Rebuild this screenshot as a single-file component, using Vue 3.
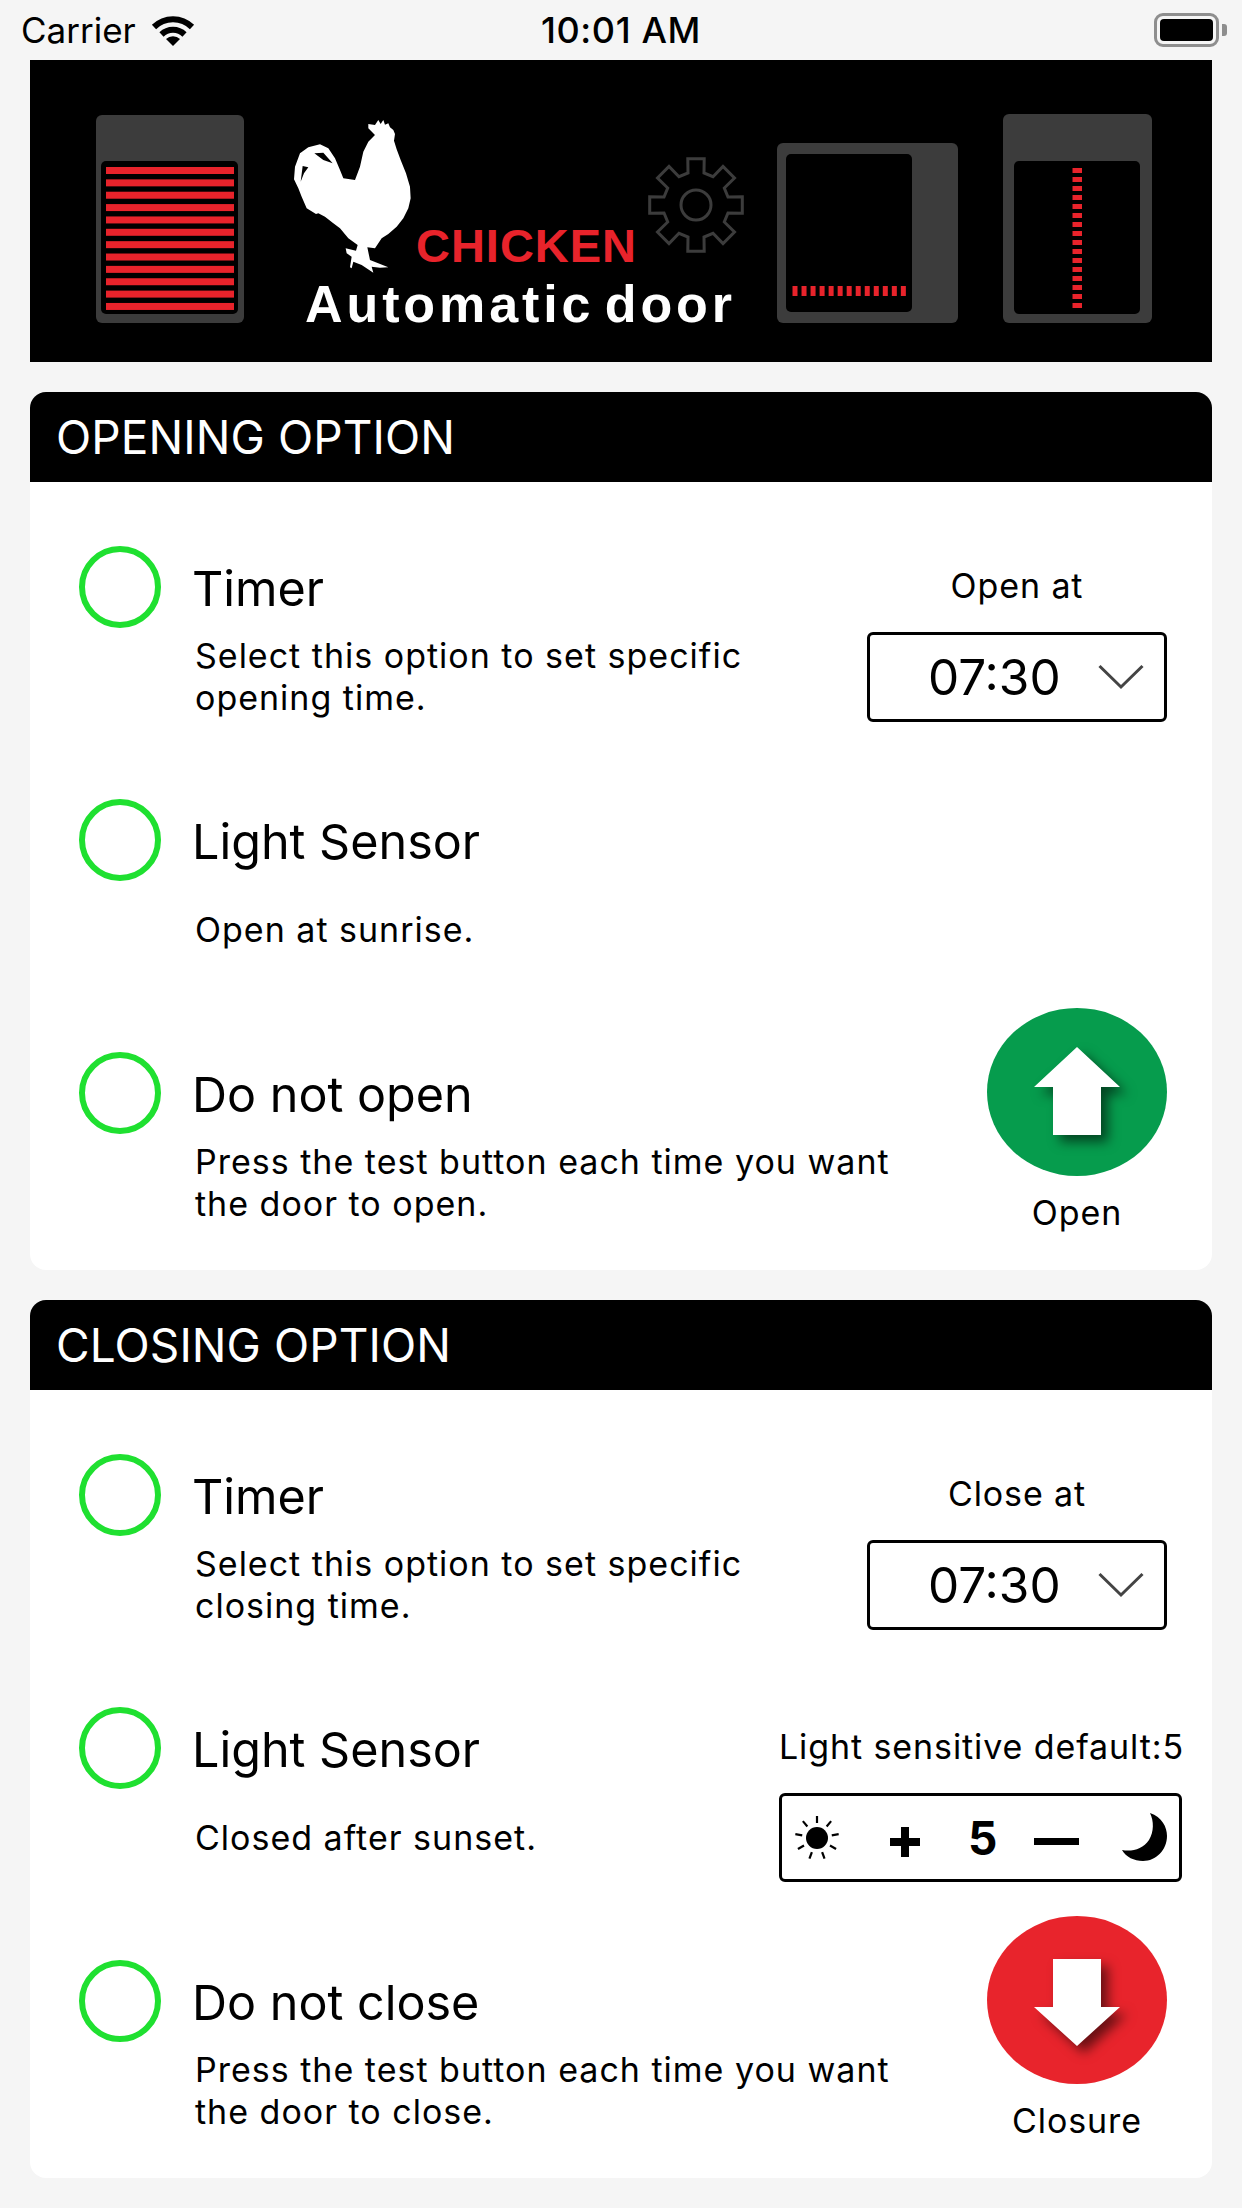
<template>
  <div class="page">
    <div class="status-bar">
      <div class="status-left">
        <span>Carrier</span>
        <svg class="wifi" width="46" height="33" viewBox="0 0 46 33">
          <path d="M4 14 A27 27 0 0 1 42 14" fill="none" stroke="#000" stroke-width="6" />
          <path d="M11.5 21.5 A16.5 16.5 0 0 1 34.5 21.5" fill="none" stroke="#000" stroke-width="6" />
          <path d="M23 33 L16 26 A10 10 0 0 1 30 26 Z" fill="#000" />
        </svg>
      </div>
      <div class="status-time">10:01 AM</div>
      <div class="status-right">
        <div class="battery"><div class="battery-level"></div></div>
        <div class="battery-nub"></div>
      </div>
    </div>

    <svg class="banner" width="1182" height="302" viewBox="30 60 1182 302">
      <rect x="30" y="60" width="1182" height="302" fill="#000" />

      <rect x="96" y="115" width="148" height="208" rx="6" fill="#3c3c3c" />
      <rect x="101" y="161" width="137" height="153" rx="5" fill="#000" />
      <rect v-for="i in 12" :key="'bar' + i" x="106" :y="167 + (i - 1) * 12.36" width="128" height="7" fill="#e8232b" />

      <g transform="translate(280 110) scale(0.3333)">
        <path
          fill="#fff"
          fill-rule="evenodd"
          d="M265 42 L285 45 L295 30 L302 42 L310 30 L315 44 L325 40 L330 52 L340 60 L345 72 L342 92 L350 118 L362 150 L378 190 L390 230 L392 265 L385 295 L370 325 L350 350 L325 372 L305 385 L285 415 L262 412 L270 450 L325 472 L300 473 L275 470 L280 488 L245 465 L220 455 L215 475 L210 472 L215 440 L200 430 L197 415 L228 422 L233 405 L205 385 L180 355 L160 340 L135 320 L115 310 L108 312 L80 295 L65 260 L55 235 L42 208 L45 170 L60 130 L85 112 L120 103 L145 115 L165 145 L180 180 L190 205 L225 210 L240 170 L250 125 L265 95 L285 75 L265 55 Z M103 130 L130 128 L158 160 L130 150 Z M62 215 L68 168 L85 172 L72 190 Z"
        />
      </g>

      <text x="416" y="262" class="logo-red" textLength="220">CHICKEN</text>
      <text x="305" y="322" class="logo-white" textLength="427">Automatic door</text>

      <path :d="gearPath" fill="none" stroke="#3c3c3c" stroke-width="3" />
      <circle cx="696" cy="205" r="15" fill="none" stroke="#3c3c3c" stroke-width="3" />

      <rect x="777" y="143" width="181" height="180" rx="6" fill="#3c3c3c" />
      <rect x="786" y="154" width="126" height="158" rx="5" fill="#000" />
      <rect v-for="i in 13" :key="'tick' + i" :x="792.5 + (i - 1) * 9.03" y="286" width="5" height="10" fill="#e8232b" />

      <rect x="1003" y="114" width="149" height="209" rx="6" fill="#3c3c3c" />
      <rect x="1014" y="161" width="126" height="153" rx="5" fill="#000" />
      <rect v-for="i in 16" :key="'dot' + i" x="1072.5" :y="168 + (i - 1) * 9" width="9.5" height="5" fill="#e8232b" />
    </svg>

    <div v-for="card in cards" :key="card.title" class="card">
      <div class="card-header">{{ card.title }}</div>
      <div class="card-body">
        <div v-for="(row, index) in card.rows" :key="row.title" class="row">
          <div class="row-main">
            <div class="row-head">
              <span class="radio"></span>
              <span class="row-title">{{ row.title }}</span>
            </div>
            <div :class="['row-desc', { spaced: index === 1 }]">{{ row.desc }}</div>
          </div>

          <div v-if="row.time" class="aside-time">
            <div class="aside-label">{{ row.label }}</div>
            <div class="time-select">
              <span class="time-value">{{ row.time }}</span>
              <svg class="chevron" width="46" height="26" viewBox="0 0 46 26">
                <path d="M1.5 2 L23 23 L44.5 2" fill="none" stroke="#444" stroke-width="3" />
              </svg>
            </div>
          </div>

          <div v-if="row.sensitive" class="aside-sensitive">
            <div class="aside-label">Light sensitive default:5</div>
            <div class="stepper">
              <svg class="sun" width="44" height="44" viewBox="-22 -22 44 44">
                <circle r="11" fill="#000" />
                <line
                  v-for="a in sunRays"
                  :key="a"
                  x1="0"
                  y1="-15"
                  x2="0"
                  y2="-22"
                  stroke="#000"
                  stroke-width="2.2"
                  :transform="`rotate(${a})`"
                />
              </svg>
              <svg class="plus" width="30" height="30" viewBox="0 0 30 30">
                <path d="M11 0 H19 V11 H30 V19 H19 V30 H11 V19 H0 V11 H11 Z" fill="#000" />
              </svg>
              <span class="step-value">5</span>
              <span class="minus"></span>
              <svg class="moon" width="45" height="49" viewBox="0 0 45 49">
                <path d="M28 0 C40 4 45 14 45 23 C45 37 34 48 21 48 C12 48 4 44 0 37 C10 39 21 36 27 27 C32 19 32 8 28 0 Z" fill="#000" />
              </svg>
            </div>
          </div>

          <div v-if="row.action" class="aside-action">
            <svg width="180" height="168" viewBox="0 0 180 168">
              <ellipse cx="90" cy="84" rx="90" ry="84" :fill="row.action.color" />
              <polygon class="arrow" :points="row.action.points" fill="#fff" />
            </svg>
            <div class="aside-label">{{ row.action.label }}</div>
          </div>
        </div>
      </div>
    </div>
  </div>
</template>

<script setup>
const sunRays = [0, 40, 80, 120, 160, 200, 240, 280, 320]

const buildGear = () => {
  const cx = 696
  const cy = 205
  const points = []
  for (let t = 0; t < 8; t++) {
    const a = t * 45
    const parts = [
      [a - 14, 33],
      [a - 10, 47],
      [a + 10, 47],
      [a + 14, 33]
    ]
    for (const [deg, r] of parts) {
      const rad = (deg * Math.PI) / 180
      points.push(`${(cx + Math.sin(rad) * r).toFixed(1)} ${(cy - Math.cos(rad) * r).toFixed(1)}`)
    }
  }
  return 'M' + points.join(' L') + ' Z'
}

const gearPath = buildGear()

const cards = [
  {
    title: 'OPENING OPTION',
    rows: [
      {
        title: 'Timer',
        desc: 'Select this option to set specific\nopening time.',
        label: 'Open at',
        time: '07:30'
      },
      {
        title: 'Light Sensor',
        desc: 'Open at sunrise.'
      },
      {
        title: 'Do not open',
        desc: 'Press the test button each time you want\nthe door to open.',
        action: {
          label: 'Open',
          color: '#069c4d',
          points: '90,39 133,79 114,79 114,127 66,127 66,79 47,79'
        }
      }
    ]
  },
  {
    title: 'CLOSING OPTION',
    rows: [
      {
        title: 'Timer',
        desc: 'Select this option to set specific\nclosing time.',
        label: 'Close at',
        time: '07:30'
      },
      {
        title: 'Light Sensor',
        desc: 'Closed after sunset.',
        sensitive: true
      },
      {
        title: 'Do not close',
        desc: 'Press the test button each time you want\nthe door to close.',
        action: {
          label: 'Closure',
          color: '#e8242c',
          points: '66,43 114,43 114,91 133,91 90,130 47,91 66,91'
        }
      }
    ]
  }
]
</script>

<style>
html,
body {
  background: #f5f5f5;
}
</style>

<style scoped>
.page {
  width: 1242px;
  height: 2208px;
  background: #f5f5f5;
  font-family: Inter, "Liberation Sans", sans-serif;
  color: #000;
  overflow: hidden;
}

.status-bar {
  height: 60px;
  display: grid;
  grid-template-columns: 1fr auto 1fr;
  align-items: center;
  padding: 0 15px 0 21px;
  font-size: 35px;
}

.status-left {
  display: flex;
  align-items: center;
  gap: 14px;
}

.wifi {
  margin-bottom: 2px;
}

.status-time {
  font-size: 36px;
  font-weight: 500;
  letter-spacing: 0.6px;
  margin-left: -6px;
}

.status-right {
  display: flex;
  justify-content: flex-end;
  align-items: center;
  gap: 3px;
}

.battery {
  width: 65px;
  height: 34px;
  box-sizing: border-box;
  border: 3px solid #8e8e8e;
  border-radius: 9px;
  padding: 3px;
}

.battery-level {
  height: 100%;
  background: #000;
  border-radius: 4px;
}

.battery-nub {
  width: 5px;
  height: 12px;
  background: #8e8e8e;
  border-radius: 0 3px 3px 0;
}

.banner {
  display: block;
  margin: 0 30px 30px;
}

.logo-red {
  font-family: "Liberation Sans", sans-serif;
  font-weight: 700;
  font-size: 47px;
  fill: #e8232b;
}

.logo-white {
  font-family: "Liberation Sans", sans-serif;
  font-weight: 700;
  font-size: 52px;
  word-spacing: -8px;
  fill: #fff;
}

.card {
  margin: 0 30px 30px;
  background: #fff;
  border-radius: 16px;
  overflow: hidden;
}

.card-header {
  height: 90px;
  background: #000;
  color: #fff;
  font-size: 46px;
  letter-spacing: 0.1px;
  line-height: 90px;
  padding-left: 26px;
}

.card-body {
  padding: 20px 45px 0 49px;
  height: 788px;
  box-sizing: border-box;
}

.row {
  height: 253px;
  display: flex;
  justify-content: space-between;
  align-items: flex-start;
}

.row-main {
  padding-top: 44px;
}

.row-head {
  display: flex;
  align-items: center;
  gap: 31px;
}

.radio {
  width: 82px;
  height: 82px;
  box-sizing: border-box;
  border: 6px solid #1fe030;
  border-radius: 50%;
}

.row-title {
  font-size: 48.5px;
  line-height: 78px;
  padding-top: 4px;
}

.row-desc {
  margin: 7px 0 0 116px;
  font-size: 34px;
  letter-spacing: 1px;
  line-height: 42px;
  white-space: pre-line;
}

.row-desc.spaced {
  margin-top: 28px;
}

.aside-label {
  font-size: 34px;
  letter-spacing: 0.9px;
  line-height: 42px;
  text-align: center;
  white-space: nowrap;
}

.aside-time {
  margin-top: 63px;
  width: 300px;
}

.time-select {
  margin-top: 25px;
  height: 90px;
  box-sizing: border-box;
  border: 3px solid #000;
  border-radius: 6px;
  display: flex;
  align-items: center;
  padding-left: 58px;
}

.time-value {
  font-size: 49.5px;
}

.chevron {
  margin-left: 37px;
}

.aside-sensitive {
  margin: 63px -15px 0 0;
  width: 403px;
}

.stepper {
  margin-top: 25px;
  height: 89px;
  box-sizing: border-box;
  border: 3px solid #000;
  border-radius: 6px;
  display: flex;
  align-items: center;
  padding-left: 13px;
}

.plus {
  margin: 8px 0 0 51px;
}

.step-value {
  margin: 0 0 0 48px;
  width: 28px;
  text-align: center;
  font-weight: 700;
  font-size: 46px;
}

.minus {
  width: 45px;
  height: 7px;
  margin: 8px 0 0 38px;
  background: #000;
}

.moon {
  margin: 0 0 0 43px;
}

.aside-action {
  width: 180px;
}

.aside-action svg {
  display: block;
  margin-bottom: 16px;
}

.arrow {
  filter: drop-shadow(7px 7px 6px rgba(0, 0, 0, 0.55));
}
</style>
